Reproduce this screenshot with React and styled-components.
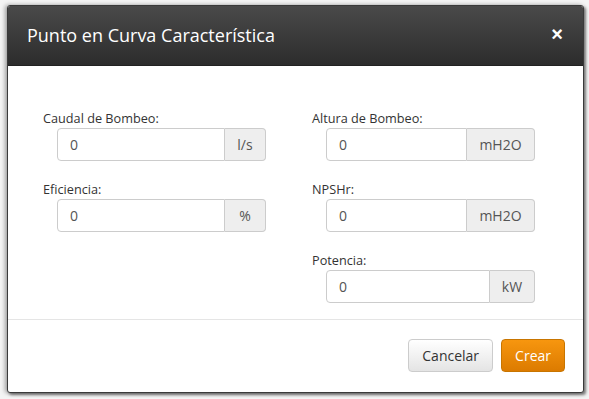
import React from 'react';
import styled, { createGlobalStyle } from 'styled-components';

const Global = createGlobalStyle`
  html, body {
    margin: 0;
    padding: 0;
    background: #e9e9e9;
    font-family: "Open Sans", "Liberation Sans", sans-serif;
  }
  * { box-sizing: border-box; }
`;

const Page = styled.div`
  width: 589px;
  height: 399px;
  padding: 5px 5px 6px 7px;
  background: #f4f4f4;
`;

const Modal = styled.div`
  width: 577px;
  height: 388px;
  display: flex;
  flex-direction: column;
  background: #fff;
  border: 1px solid #3a3a3a;
  border-radius: 3px;
  box-shadow: -2px 0 4px rgba(0, 0, 0, 0.35), 2px 2px 3px rgba(0, 0, 0, 0.5);
  overflow: hidden;
`;

const Header = styled.div`
  height: 60px;
  flex: none;
  display: flex;
  align-items: center;
  justify-content: space-between;
  padding: 0 20px 0 19px;
  background: linear-gradient(#4a4a4a, #2c2c2c);
  border-bottom: 1px solid #222;
`;

const Title = styled.h4`
  margin: 0 0 1px;
  font-size: 18px;
  font-weight: 400;
  color: #fff;
`;

const Close = styled.button`
  border: 0;
  background: none;
  padding: 0;
  color: #fff;
  font-family: "Liberation Sans", sans-serif;
  font-size: 20px;
  font-weight: 700;
  line-height: 1;
  margin-top: -4px;
  cursor: pointer;
`;

const Body = styled.div`
  flex: none;
  height: 254px;
  padding: 43px 0 0 35px;
  display: grid;
  grid-template-columns: 269px 269px;
  align-content: start;
  border-bottom: 1px solid #e5e5e5;
`;

const Column = styled.div`
  display: flex;
  flex-direction: column;
`;

const Field = styled.div`
  margin-bottom: 19px;
`;

const Label = styled.label`
  display: block;
  height: 18px;
  line-height: 18px;
  font-size: 12.7px;
  color: #333;
  margin-bottom: 1px;
`;

const Group = styled.div`
  display: flex;
  width: 209px;
  height: 33px;
  margin-left: 14px;
  margin-top: 1px;
`;

const Input = styled.input`
  flex: 1;
  min-width: 0;
  border: 1px solid #ccc;
  border-radius: 4px 0 0 4px;
  padding: 0 12px;
  font-family: inherit;
  font-size: 14px;
  color: #555;
  outline: none;
`;

const Addon = styled.span`
  flex: none;
  width: ${p => p.$w}px;
  display: flex;
  align-items: center;
  justify-content: center;
  background: #eee;
  border: 1px solid #ccc;
  border-left: 0;
  border-radius: 0 4px 4px 0;
  font-size: 14px;
  color: #555;
`;

const Footer = styled.div`
  flex: 1;
  display: flex;
  justify-content: flex-end;
  align-items: flex-start;
  gap: 8px;
  padding: 19px 18px 0 0;
`;

const Button = styled.button`
  height: 33px;
  padding: 0 13px;
  border-radius: 4px;
  font-family: inherit;
  font-size: 14px;
  cursor: pointer;
  border: 1px solid ${p => (p.$primary ? '#c87500' : '#ccc')};
  color: ${p => (p.$primary ? '#fff' : '#333')};
  background: ${p =>
    p.$primary
      ? 'linear-gradient(#f7960f, #dc7b00)'
      : 'linear-gradient(#ffffff, #e4e4e4)'};
`;

const fields = {
  left: [
    { label: 'Caudal de Bombeo:', unit: 'l/s', w: 41 },
    { label: 'Eficiencia:', unit: '%', w: 41 }
  ],
  right: [
    { label: 'Altura de Bombeo:', unit: 'mH2O', w: 68 },
    { label: 'NPSHr:', unit: 'mH2O', w: 68 },
    { label: 'Potencia:', unit: 'kW', w: 45 }
  ]
};

function InputField({ label, unit, w }) {
  return (
    <Field>
      <Label>{label}</Label>
      <Group>
        <Input defaultValue="0" />
        <Addon $w={w}>{unit}</Addon>
      </Group>
    </Field>
  );
}

export default function App() {
  return (
    <Page>
      <Global />
      <Modal>
        <Header>
          <Title>Punto en Curva Característica</Title>
          <Close>×</Close>
        </Header>
        <Body>
          <Column>
            {fields.left.map(f => (
              <InputField key={f.label} {...f} />
            ))}
          </Column>
          <Column>
            {fields.right.map(f => (
              <InputField key={f.label} {...f} />
            ))}
          </Column>
        </Body>
        <Footer>
          <Button>Cancelar</Button>
          <Button $primary>Crear</Button>
        </Footer>
      </Modal>
    </Page>
  );
}
